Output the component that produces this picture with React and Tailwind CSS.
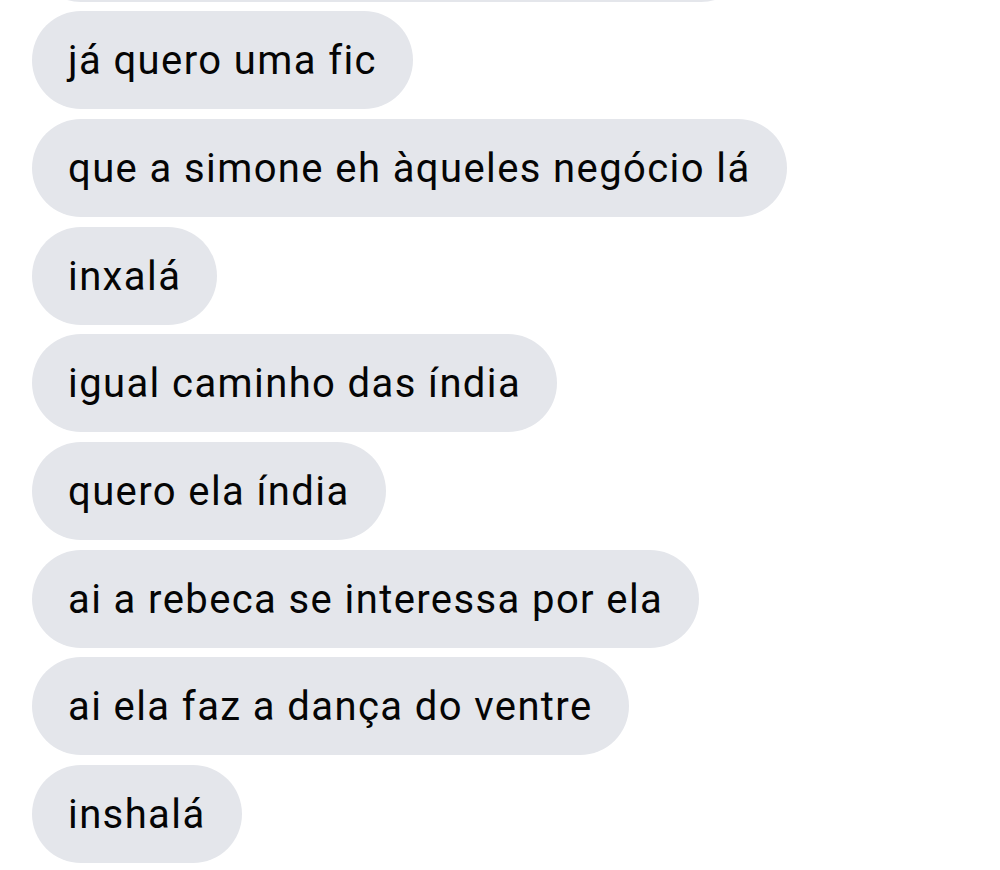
const messages = [
    "já quero uma fic",
    "que a simone eh àqueles negócio lá",
    "inxalá",
    "igual caminho das índia",
    "quero ela índia",
    "ai a rebeca se interessa por ela",
    "ai ela faz a dança do ventre",
    "inshalá",
]

function Bubble({ text }) {
    return (
        <div className="self-start h-[98px] flex items-center pt-[2px] px-[36px] rounded-full bg-[#e4e6eb] text-[#050505] text-[40px] tracking-[1.4px] leading-none whitespace-nowrap">
            {text}
        </div>
    )
}

export default function App() {
    return (
        <div className="bg-white w-[1000px] h-[870px] overflow-hidden font-['Roboto',sans-serif]">
            <div className="flex flex-col gap-[9.7px] pl-[32px] mt-[-96.5px]">
                {/* message cut off above the screenshot */}
                <div className="h-[98px] w-[718px] rounded-full bg-[#e4e6eb]" />
                {messages.map(function (m, i) {
                    return <Bubble key={i} text={m} />
                })}
            </div>
        </div>
    )
}
